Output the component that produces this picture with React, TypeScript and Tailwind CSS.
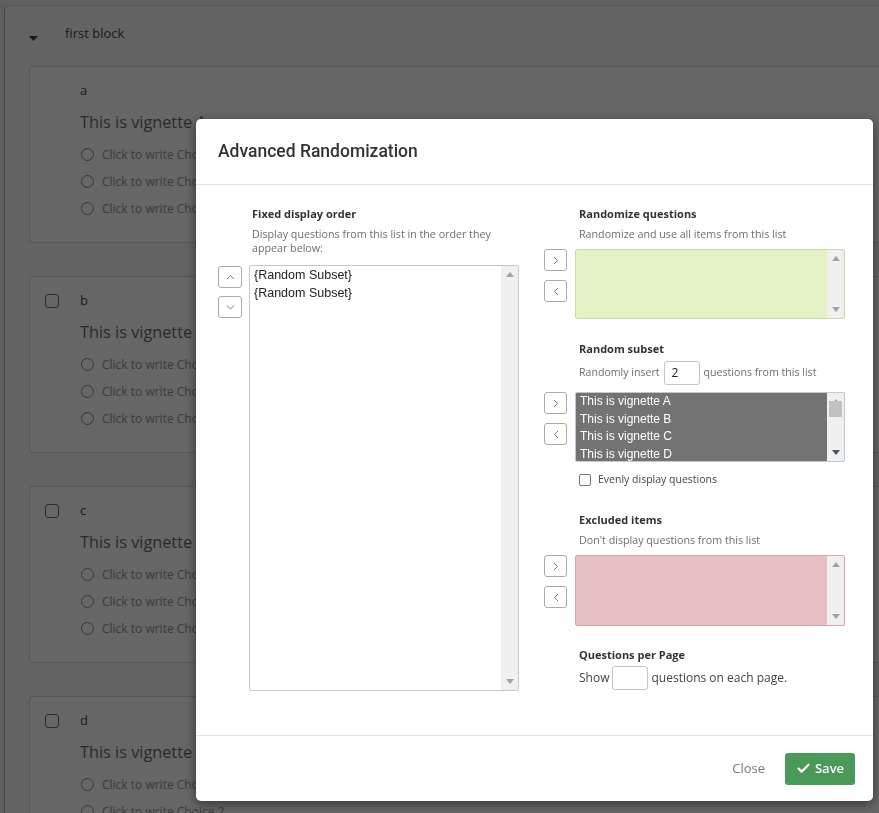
import { Check } from "lucide-react";

type BoxProps = {
    className: string;
    height: string;
    items?: string[];
    itemClass?: string;
    thumb?: boolean;
    darkArrow?: boolean;
};

function ScrollTrack(props: { thumb?: boolean; darkArrow?: boolean }) {
    return (
        <div className="flex w-[17px] flex-col items-center justify-between bg-[#f0f0f0] py-[6px]">
            <svg width="8" height="5" viewBox="0 0 8 5">
                <path d="M0 5 L4 0 L8 5 Z" fill="#a3a3a3"/>
            </svg>
            {props.thumb && <div className="-mt-[36px] h-[16px] w-[13px] bg-[#c1c1c1]"/>}
            <svg width="8" height="5" viewBox="0 0 8 5">
                <path d="M0 0 L4 5 L8 0 Z" fill={props.darkArrow ? "#505050" : "#a3a3a3"}/>
            </svg>
        </div>
    );
}

function ListBox(props: BoxProps) {
    return (
        <div className={`flex w-[270px] overflow-hidden rounded-[2px] border ${props.height} ${props.className}`}>
            <div className="flex-1 pl-[4px]" style={{fontFamily: '"Liberation Sans", Arial, sans-serif'}}>
                {props.items?.map((item, i) => (
                    <div key={i} className={props.itemClass}>{item}</div>
                ))}
            </div>
            <ScrollTrack thumb={props.thumb} darkArrow={props.darkArrow}/>
        </div>
    );
}

function ArrowButton(props: { dir: "up" | "down" | "left" | "right"; wide?: boolean }) {
    const paths = {
        up: "M1 5 L4.5 1.5 L8 5",
        down: "M1 1.5 L4.5 5 L8 1.5",
        right: "M2 1 L5.5 4.5 L2 8",
        left: "M6 1 L2.5 4.5 L6 8",
    };
    const isVertical = props.dir === "up" || props.dir === "down";
    return (
        <button
            className={`flex h-[22px] items-center justify-center rounded-[3px] border border-[#a9a9a9] bg-white ${props.wide ? "w-[24px]" : "w-[23px]"}`}>
            <svg width={isVertical ? 9 : 8} height={isVertical ? 6 : 9} viewBox={isVertical ? "0 0 9 6" : "0 0 8 9"}>
                <path d={paths[props.dir]} fill="none" stroke="#777" strokeWidth="1"/>
            </svg>
        </button>
    );
}

function SectionTitle(props: { children: React.ReactNode; className?: string }) {
    return (
        <div className={`h-[15px] text-[11px] font-bold leading-[15px] text-[#333] ${props.className ?? ""}`}>
            {props.children}
        </div>
    );
}

function SectionDesc(props: { children: React.ReactNode; className?: string }) {
    return (
        <div className={`text-[10.7px] leading-[14px] text-[#6e6e6e] ${props.className ?? ""}`}>
            {props.children}
        </div>
    );
}

function RightButtons() {
    return (
        <div className="flex w-[31px] flex-col gap-[9px]">
            <ArrowButton dir="right"/>
            <ArrowButton dir="left"/>
        </div>
    );
}

function Question(props: { label: string; title: string; checkbox: boolean; choices: number }) {
    return (
        <div className="relative ml-[24px] border border-r-0 border-[#dadada] rounded-l-[4px] bg-white pb-[20px] pl-[50px] pt-[14px]">
            {props.checkbox && (
                <div className="absolute left-[15px] top-[17px] h-[14px] w-[14px] rounded-[3px] border border-[#6f6f6f] bg-white"/>
            )}
            <div className="h-[18px] text-[13px] leading-[18px] text-[#4a4a4a]">{props.label}</div>
            <div className="mt-[11px] h-[24px] text-[16.3px] leading-[24px] text-[#6a6a6a]">{props.title}</div>
            <div className="mt-[7px]">
                {Array.from({length: props.choices}).map((_, i) => (
                    <div key={i} className="flex h-[27px] items-center">
                        <div className="ml-[1px] h-[13px] w-[13px] rounded-full border border-[#8a8a8a]"/>
                        <span className="ml-[8px] text-[12px] text-[#959595]">Click to write Choice {i + 1}</span>
                    </div>
                ))}
            </div>
        </div>
    );
}

export default function App() {
    return (
        <div className="relative h-[813px] overflow-hidden bg-[#eeeeee]" style={{fontFamily: '"Open Sans", sans-serif'}}>
            {/* page behind the dialog */}
            <div className="ml-[4px] mt-[5px] rounded-tl-[5px] border border-r-0 border-[#d4d9df] border-l-[#9fb0c6] bg-[#f8f8f8] pb-10">
                <div className="flex h-[56px] items-center">
                    <svg className="ml-[24px] mt-[8px]" width="9" height="5" viewBox="0 0 9 5">
                        <path d="M0 0 L9 0 L4.5 5 Z" fill="#3a3a3a"/>
                    </svg>
                    <span className="ml-[27px] text-[13px] text-[#474747]">first block</span>
                </div>
                <div className="mt-[4px] flex flex-col gap-[33px]">
                    <Question label="a" title="This is vignette A" checkbox={false} choices={3}/>
                    <Question label="b" title="This is vignette B" checkbox={true} choices={3}/>
                    <Question label="c" title="This is vignette C" checkbox={true} choices={3}/>
                    <Question label="d" title="This is vignette D" checkbox={true} choices={3}/>
                </div>
            </div>

            {/* backdrop */}
            <div className="fixed inset-0 bg-black/60"/>

            {/* dialog */}
            <div className="fixed inset-0 pl-[196px] pt-[119px]">
                <div className="flex h-[682px] w-[677px] flex-col rounded-[5px] bg-white shadow-[0_3px_12px_rgba(0,0,0,0.5)]">
                    <div className="flex h-[66px] shrink-0 items-center border-b border-[#e5e5e5] px-[22px]">
                        <h2 className="text-[17.5px] font-medium text-[#333]" style={{fontFamily: 'Roboto, sans-serif'}}>
                            Advanced Randomization
                        </h2>
                    </div>

                    <div className="flex flex-1 gap-[25px] border-b border-[#e5e5e5] pl-[22px] pt-[21px]">
                        {/* fixed display order */}
                        <div className="flex">
                            <div className="mt-[60px] flex w-[31px] flex-col gap-[8px]">
                                <ArrowButton dir="up" wide/>
                                <ArrowButton dir="down" wide/>
                            </div>
                            <div>
                                <SectionTitle className="pl-[3px]">Fixed display order</SectionTitle>
                                <SectionDesc className="mt-[6px] w-[250px] pl-[3px]">
                                    Display questions from this list in the order they appear below:
                                </SectionDesc>
                                <ListBox
                                    className="mt-[10px] border-[#c9c9c9] bg-white"
                                    height="h-[426px]"
                                    items={["{Random Subset}", "{Random Subset}"]}
                                    itemClass="text-[12.5px] leading-[18px] text-[#222]"
                                />
                            </div>
                        </div>

                        {/* right column */}
                        <div className="flex flex-col">
                            <SectionTitle className="pl-[35px]">Randomize questions</SectionTitle>
                            <SectionDesc className="mt-[6px] pl-[35px]">Randomize and use all items from this list</SectionDesc>
                            <div className="mt-[8px] flex">
                                <RightButtons/>
                                <ListBox className="border-[#cbdca9] bg-[#e4f2c6]" height="h-[70px]"/>
                            </div>

                            <SectionTitle className="mt-[22px] pl-[35px]">Random subset</SectionTitle>
                            <div className="mt-[5px] flex h-[24px] items-center pl-[35px] text-[10.6px] text-[#6e6e6e]">
                                <span>Randomly insert</span>
                                <div className="mx-[4px] flex h-[24px] w-[36px] items-center rounded-[3px] border border-[#c4c4c4] pl-[7px] text-[12px] text-[#222]">2</div>
                                <span>questions from this list</span>
                            </div>
                            <div className="mt-[7px] flex">
                                <RightButtons/>
                                <ListBox
                                    className="border-[#b9cadb] bg-[#737373]"
                                    height="h-[70px]"
                                    items={["This is vignette A", "This is vignette B", "This is vignette C", "This is vignette D"]}
                                    itemClass="text-[12px] leading-[17.5px] text-white"
                                    thumb
                                    darkArrow
                                />
                            </div>
                            <div className="mt-[10px] flex h-[16px] items-center pl-[35px]">
                                <div className="h-[12px] w-[12px] rounded-[2px] border border-[#767676] bg-white"/>
                                <span className="ml-[7px] text-[10.5px] text-[#444]">Evenly display questions</span>
                            </div>

                            <SectionTitle className="mt-[24px] pl-[35px]">Excluded items</SectionTitle>
                            <SectionDesc className="mt-[6px] pl-[35px]">Don't display questions from this list</SectionDesc>
                            <div className="mt-[8px] flex">
                                <RightButtons/>
                                <ListBox className="border-[#dba6a6] bg-[#e6c0c0]" height="h-[71px]"/>
                            </div>

                            <SectionTitle className="mt-[21px] pl-[35px]">Questions per Page</SectionTitle>
                            <div className="mt-[4px] flex h-[24px] items-center pl-[35px] text-[12px] text-[#444]">
                                <span>Show</span>
                                <div className="mx-[3px] h-[24px] w-[36px] rounded-[3px] border border-[#c4c4c4]"/>
                                <span>questions on each page.</span>
                            </div>
                        </div>
                    </div>

                    <div className="flex h-[65px] shrink-0 items-center justify-end pr-[18px]">
                        <button className="mr-[20px] text-[13px] text-[#777]">Close</button>
                        <button className="flex h-[32px] w-[70px] items-center justify-center gap-[4px] rounded-[3px] bg-[#4b9958] text-[13px] font-semibold text-white">
                            <Check size={15} strokeWidth={3.5}/>
                            Save
                        </button>
                    </div>
                </div>
            </div>
        </div>
    );
}
